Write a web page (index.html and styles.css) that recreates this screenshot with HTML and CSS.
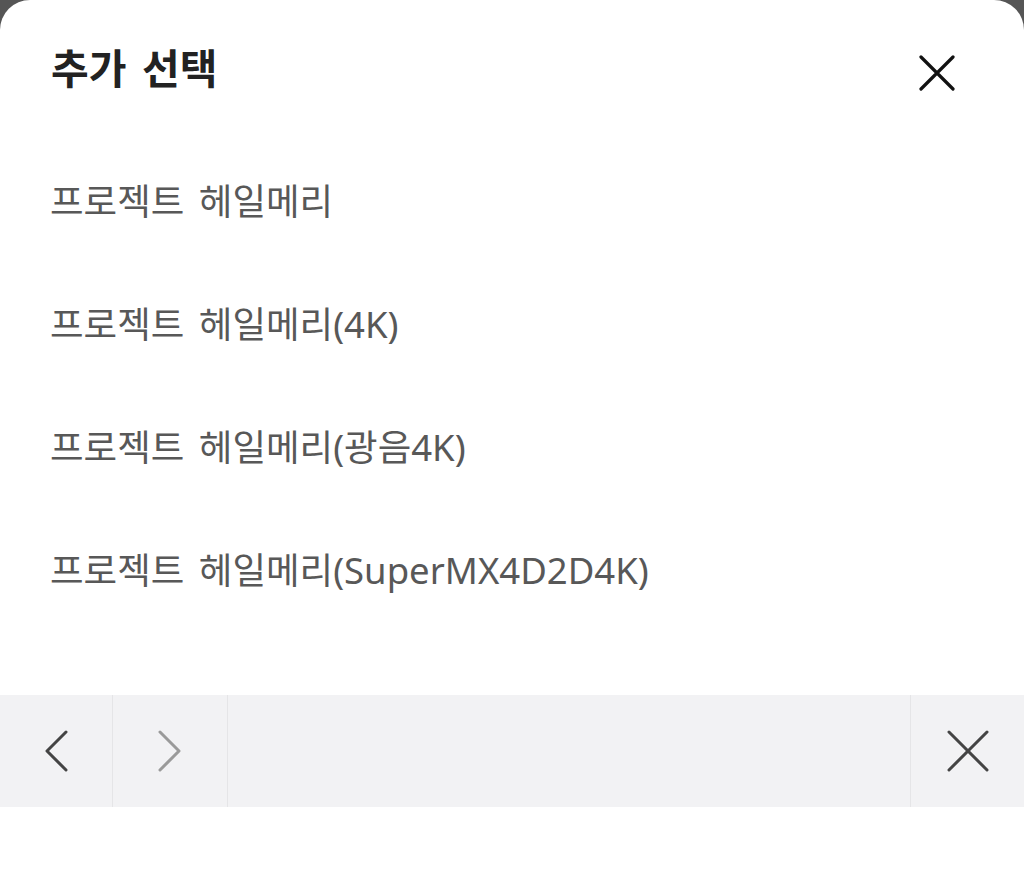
FILE: index.html
```html
<!DOCTYPE html>
<html lang="ko">
<head>
<meta charset="utf-8">
<link rel="stylesheet" href="styles.css">
</head>
<body>
<div class="sheet">
  <header class="header">
    <h1 class="title">추가 선택</h1>
    <button class="close" aria-label="닫기">
      <svg width="36" height="36" viewBox="0 0 36 36"><path d="M2 2L34 34M34 2L2 34" stroke="#111" stroke-width="3.2" stroke-linecap="round" fill="none"/></svg>
    </button>
  </header>
  <ul class="list">
    <li class="item">프로젝트 헤일메리</li>
    <li class="item">프로젝트 헤일메리(4K)</li>
    <li class="item">프로젝트 헤일메리(광음4K)</li>
    <li class="item">프로젝트 헤일메리(SuperMX4D2D4K)</li>
  </ul>
  <div class="spacer"></div>
  <nav class="toolbar">
    <button class="tool tool-prev" aria-label="이전">
      <svg width="26" height="42" viewBox="0 0 26 42"><path d="M23 2L4 21L23 40" stroke="#444" stroke-width="3" stroke-linecap="round" stroke-linejoin="round" fill="none"/></svg>
    </button>
    <button class="tool tool-next" aria-label="다음">
      <svg width="26" height="42" viewBox="0 0 26 42"><path d="M3 2L22 21L3 40" stroke="#9a9a9a" stroke-width="3" stroke-linecap="round" stroke-linejoin="round" fill="none"/></svg>
    </button>
    <div class="tool-fill"></div>
    <button class="tool tool-close" aria-label="닫기">
      <svg width="42" height="42" viewBox="0 0 42 42"><path d="M2 2L40 40M40 2L2 40" stroke="#444" stroke-width="3" stroke-linecap="round" fill="none"/></svg>
    </button>
  </nav>
  <div class="bottom"></div>
</div>
</body>
</html>
```

FILE: styles.css
```css
html, body {
  margin: 0;
  padding: 0;
  height: 100%;
}
body {
  background: #555555;
  font-family: "Noto Sans CJK KR", "Noto Sans", sans-serif;
  overflow: hidden;
}
.sheet {
  background: #ffffff;
  border-radius: 30px 30px 0 0;
  height: 894px;
  display: flex;
  flex-direction: column;
}
.header {
  height: 141px;
  display: flex;
  align-items: center;
  justify-content: space-between;
  padding: 0 69px 0 51px;
  box-sizing: border-box;
}
.title {
  margin: 0;
  font-size: 41px;
  font-weight: 700;
  color: #222222;
  line-height: 1;
  padding-bottom: 9px;
  word-spacing: 4px;
}
.close {
  border: 0;
  background: none;
  padding: 0;
  width: 36px;
  height: 36px;
  display: flex;
  margin-top: 4px;
}
.list {
  list-style: none;
  margin: 0;
  padding: 0;
}
.item {
  height: 123px;
  display: flex;
  align-items: center;
  padding-left: 50px;
  font-family: "Noto Sans", "Noto Sans CJK KR", sans-serif;
  font-size: 36.5px;
  color: #585858;
  line-height: 1;
  padding-bottom: 2px;
  box-sizing: border-box;
  word-spacing: 5px;
}
.spacer {
  height: 62px;
}
.toolbar {
  height: 112px;
  background: #f2f2f4;
  display: flex;
}
.tool {
  border: 0;
  background: none;
  padding: 0;
  display: flex;
  align-items: center;
  justify-content: center;
}
.tool-prev {
  width: 113px;
  border-right: 1px solid #e5e5e7;
}
.tool-next {
  width: 115px;
  border-right: 1px solid #e5e5e7;
}
.tool-fill {
  flex: 1;
  border-right: 1px solid #e5e5e7;
}
.tool-close {
  width: 113px;
}
.bottom {
  flex: 1;
  background: #ffffff;
}
```
